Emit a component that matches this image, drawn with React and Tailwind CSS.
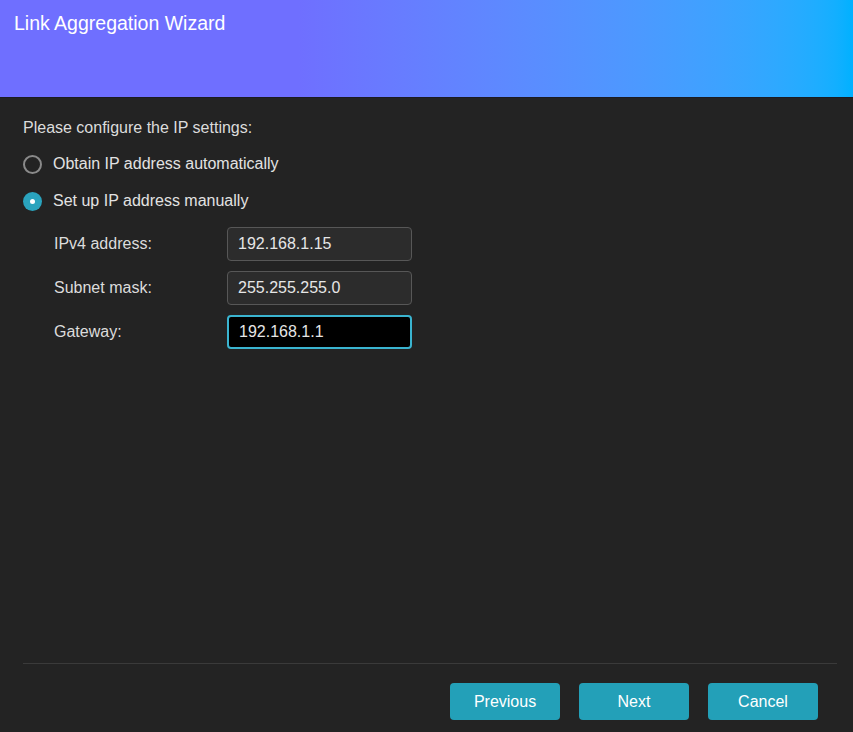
import React, { useState } from 'react';

const fieldClass =
  'h-[34px] w-[185px] rounded-[4px] px-[10px] text-[16px] text-[#e6e6e6] outline-none';

const Radio = ({ checked, label, onSelect }) => (
  <label className="flex items-center gap-[11px] cursor-pointer" onClick={onSelect}>
    {checked ? (
      <span className="flex h-[19px] w-[19px] items-center justify-center rounded-full bg-[#2aa3bd]">
        <span className="h-[5px] w-[5px] rounded-full bg-white" />
      </span>
    ) : (
      <span className="h-[19px] w-[19px] rounded-full border-2 border-[#8a8a8a]" />
    )}
    <span className="text-[16px] text-[#e2e2e2]">{label}</span>
  </label>
);

const Field = ({ label, value, onChange, focused }) => (
  <div className="flex items-center">
    <span className="w-[173px] text-[16px] text-[#dcdcdc]">{label}</span>
    <input
      type="text"
      value={value}
      onChange={(e) => onChange(e.target.value)}
      className={
        focused
          ? `${fieldClass} border-2 border-[#3ab4d0] bg-black`
          : `${fieldClass} border border-[#575757] bg-[#2c2c2c]`
      }
    />
  </div>
);

const App = () => {
  const [mode, setMode] = useState('manual');
  const [ipv4, setIpv4] = useState('192.168.1.15');
  const [mask, setMask] = useState('255.255.255.0');
  const [gateway, setGateway] = useState('192.168.1.1');

  return (
    <div
      className="flex h-[732px] w-[853px] flex-col bg-[#232323]"
      style={{ fontFamily: '"Liberation Sans", Arial, sans-serif' }}
    >
      <div className="h-[98px] shrink-0 border-b border-[#1b1b22] bg-linear-to-r from-[#6f6fff] from-35% to-[#00b1ff] px-[14px] pt-[9px]">
        <h1 className="text-[19.5px] text-white">Link Aggregation Wizard</h1>
      </div>

      <div className="flex flex-1 flex-col px-[23px] pt-[18px]">
        <p className="text-[16px] text-[#dcdcdc]">Please configure the IP settings:</p>

        <div className="mt-[12px] flex flex-col gap-[13px]">
          <Radio
            checked={mode === 'auto'}
            label="Obtain IP address automatically"
            onSelect={() => setMode('auto')}
          />
          <Radio
            checked={mode === 'manual'}
            label="Set up IP address manually"
            onSelect={() => setMode('manual')}
          />
        </div>

        <div className="mt-[14px] flex flex-col gap-[10px] pl-[31px]">
          <Field label="IPv4 address:" value={ipv4} onChange={setIpv4} />
          <Field label="Subnet mask:" value={mask} onChange={setMask} />
          <Field label="Gateway:" value={gateway} onChange={setGateway} focused />
        </div>

        <div className="mt-auto border-t border-[#3a3a3a] mr-[-7px]" />
        <div className="flex justify-end gap-[19px] pr-[12px] pt-[19px] pb-[12px]">
          {['Previous', 'Next', 'Cancel'].map((b) => (
            <button
              key={b}
              type="button"
              className="h-[37px] w-[110px] rounded-[4px] bg-[#23a0b8] text-[16px] text-white"
            >
              {b}
            </button>
          ))}
        </div>
      </div>
    </div>
  );
};

export default App;
